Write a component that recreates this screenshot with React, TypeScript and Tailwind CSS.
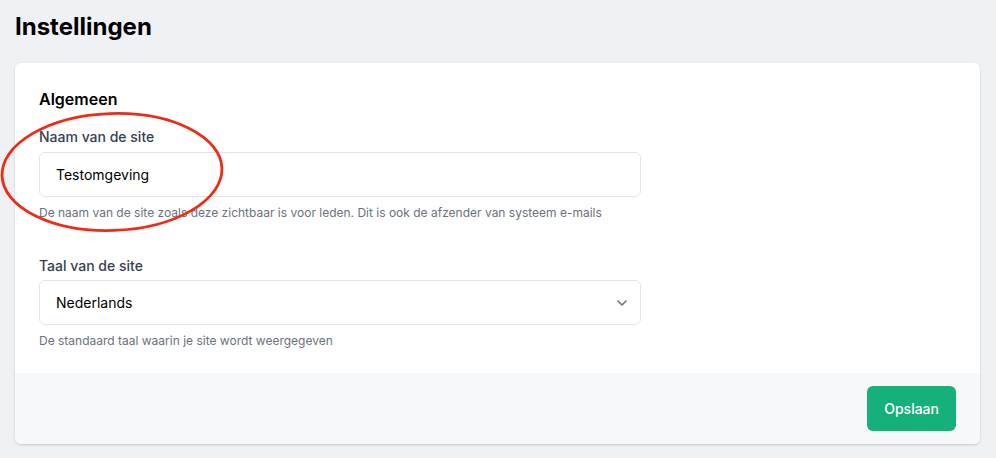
import React from "react";

export default function App() {
  return (
    <div
      className="relative min-h-[458px] bg-[#f0f1f5] pl-[15px] pr-4 pt-[11px] pb-4"
      style={{ fontFamily: "Inter, 'Noto Sans', sans-serif" }}
    >
      <h1 className="text-2xl leading-8 font-bold text-black">Instellingen</h1>
      <div className="mt-5 rounded-md bg-white shadow-[0_1px_3px_rgba(0,0,0,0.12),0_1px_2px_rgba(0,0,0,0.06)] overflow-hidden">
        <div className="p-6">
          <h2 className="text-base leading-6 font-semibold text-black">Algemeen</h2>
          <div className="mt-4">
            <label className="block text-sm leading-5 font-medium text-[#374151]">Naam van de site</label>
            <div className="mt-[5px] w-[602px] h-[45px] rounded-md border border-[#e3e4e8] flex items-center px-4 text-sm text-black">
              Testomgeving
            </div>
            <p className="mt-2 text-xs leading-4 text-[#6b7280]">
              De naam van de site zoals deze zichtbaar is voor leden. Dit is ook de afzender van systeem e-mails
            </p>
          </div>
          <div className="mt-[35px]">
            <label className="block text-sm leading-5 font-medium text-[#374151]">Taal van de site</label>
            <div className="mt-[4px] w-[602px] h-[45px] rounded-md border border-[#e3e4e8] flex items-center justify-between pl-4 pr-[8px] text-sm text-black">
              <span>Nederlands</span>
              <svg width="20" height="20" viewBox="0 0 20 20" fill="none" className="text-[#6b7280]">
                <path d="M6 8l4 4 4-4" stroke="currentColor" strokeWidth="1.6" strokeLinecap="round" strokeLinejoin="round" />
              </svg>
            </div>
            <p className="mt-2 text-xs leading-4 text-[#6b7280]">De standaard taal waarin je site wordt weergegeven</p>
          </div>
        </div>
        <div className="bg-[#f7f8fa] px-6 py-[13px] flex justify-end">
          <button className="h-[45px] rounded-md bg-[#16b17a] px-[17px] text-sm font-medium text-white">Opslaan</button>
        </div>
      </div>
      <svg
        className="absolute left-0 top-0 pointer-events-none"
        width="240"
        height="240"
        viewBox="0 0 240 240"
      >
        <ellipse
          cx="112"
          cy="172"
          rx="110"
          ry="58.5"
          fill="none"
          stroke="#ee2b16"
          strokeWidth="2.8"
          transform="rotate(-2 112 172)"
        />
      </svg>
    </div>
  );
}
